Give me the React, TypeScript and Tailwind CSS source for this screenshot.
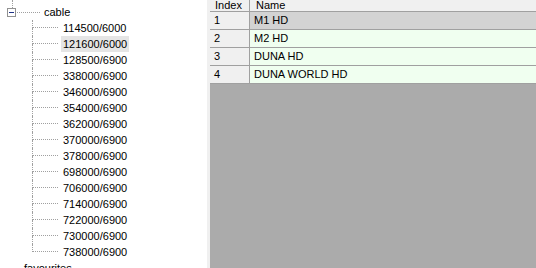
import React from "react";

const items = [
  "114500/6000",
  "121600/6000",
  "128500/6900",
  "338000/6900",
  "346000/6900",
  "354000/6900",
  "362000/6900",
  "370000/6900",
  "378000/6900",
  "698000/6900",
  "706000/6900",
  "714000/6900",
  "722000/6900",
  "730000/6900",
  "738000/6900",
];

const rows = [
  { i: "1", name: "M1 HD", sel: true },
  { i: "2", name: "M2 HD", sel: false },
  { i: "3", name: "DUNA HD", sel: false },
  { i: "4", name: "DUNA WORLD HD", sel: false },
];

export default function App() {
  return (
    <div
      className="w-[536px] h-[268px] flex overflow-hidden bg-white text-[11px] leading-4 text-black"
      style={{ fontFamily: '"Liberation Sans", Arial, sans-serif' }}
    >
      {/* Tree */}
      <div className="w-[207px] shrink-0 bg-white overflow-hidden flex flex-col">
        {/* top connector */}
        <div className="h-[4px] flex">
          <div className="w-[12px] shrink-0" />
          <div className="h-[8px] border-l border-dotted border-[#a0a0a0]" />
        </div>
        {/* cable row */}
        <div className="h-4 flex items-center shrink-0">
          <div className="w-[7px] shrink-0" />
          <div className="w-[9px] h-[9px] border border-[#919191] bg-white flex items-center justify-center shrink-0">
            <div className="w-[5px] h-px bg-[#1e3287]" />
          </div>
          <div className="w-[23px] border-t border-dotted border-[#a0a0a0] ml-[1px]" />
          <div className="pl-[4px] pr-[2px]">cable</div>
        </div>
        {/* children */}
        {items.map((t, idx) => {
          const last = idx === items.length - 1;
          const selected = t === "121600/6000";
          return (
            <div key={t} className="h-4 flex shrink-0">
              <div className="w-[32px] shrink-0" />
              <div className="flex flex-col w-[26px] shrink-0">
                <div className="h-[8px] border-l border-b border-dotted border-[#a0a0a0]" />
                <div
                  className={
                    last ? "h-[8px]" : "h-[8px] border-l border-dotted border-[#a0a0a0]"
                  }
                />
              </div>
              <div className="w-[3px] shrink-0" />
              <div className={selected ? "px-[2px] bg-[#e5e5e5]" : "px-[2px]"}>{t}</div>
            </div>
          );
        })}
        <div className="h-4 flex shrink-0">
          <div className="w-[22px] shrink-0" />
          <div className="px-[2px]">favourites</div>
        </div>
      </div>

      {/* splitter */}
      <div className="w-[3px] shrink-0 bg-[#f0f0f0]" />

      {/* Grid */}
      <div className="flex-1 bg-[#ababab] flex flex-col overflow-hidden">
        {/* header */}
        <div className="h-[12px] flex bg-[#f0f0f0] border-b border-[#a0a0a0] shrink-0">
          <div className="w-[40px] shrink-0 border-r border-[#a0a0a0] pl-[5px] leading-[10px]">Index</div>
          <div className="flex-1 pl-[6px] leading-[10px]">Name</div>
        </div>
        {rows.map((r) => (
          <div key={r.i} className="h-[18px] flex border-b border-[#a0a0a0] shrink-0">
            <div className="w-[40px] shrink-0 bg-[#f0f0f0] border-r border-[#a0a0a0] pl-[4px] leading-[17px]">
              {r.i}
            </div>
            <div
              className={
                r.sel
                  ? "flex-1 bg-[#d3d3d3] pl-[4px] leading-[17px]"
                  : "flex-1 bg-[#f0fff0] pl-[4px] leading-[17px]"
              }
            >
              {r.name}
            </div>
          </div>
        ))}
        <div className="flex-1" />
      </div>
    </div>
  );
}
